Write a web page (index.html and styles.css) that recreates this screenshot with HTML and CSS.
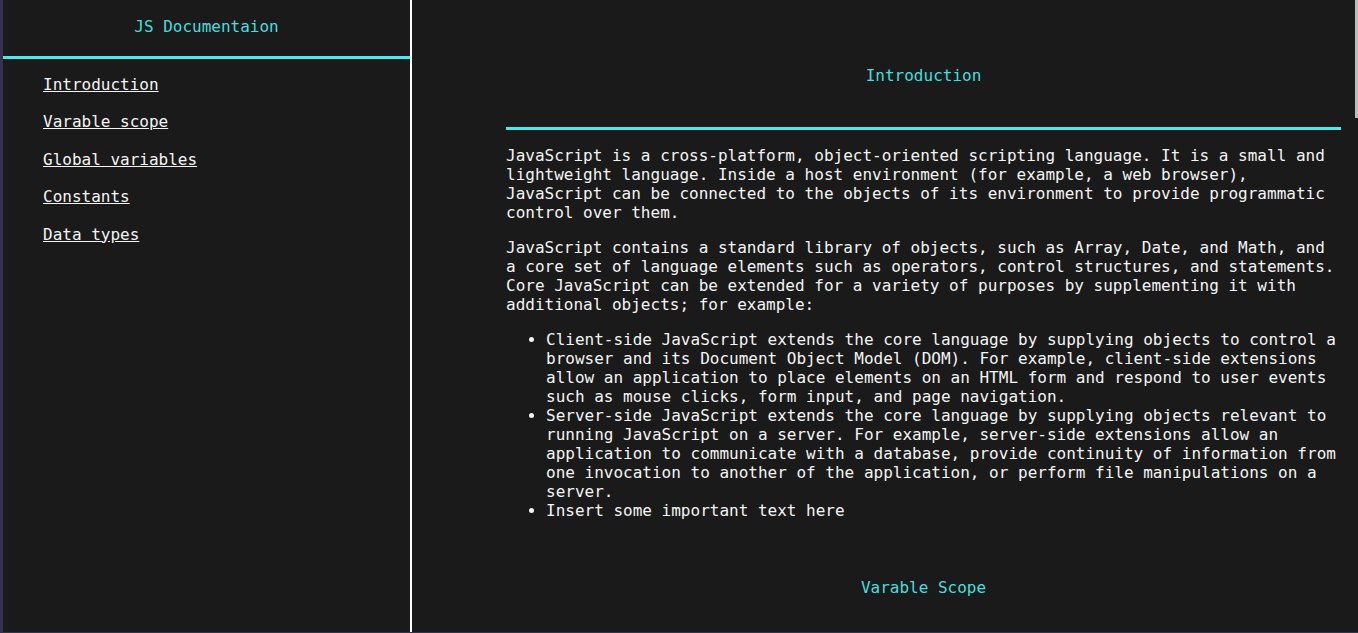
FILE: index.html
```html
<!DOCTYPE html>
<html lang="en">
<head>
<meta charset="utf-8">
<title>JS Documentation</title>
<link rel="stylesheet" href="styles.css">
</head>
<body>
<div class="page">
  <nav class="navbar" id="navbar">
    <header class="nav-header">JS Documentaion</header>
    <ul class="nav-list">
      <li><a class="nav-link" href="#Introduction">Introduction</a></li>
      <li><a class="nav-link" href="#Varable_scope">Varable scope</a></li>
      <li><a class="nav-link" href="#Global_variables">Global variables</a></li>
      <li><a class="nav-link" href="#Constants">Constants</a></li>
      <li><a class="nav-link" href="#Data_types">Data types</a></li>
    </ul>
  </nav>
  <main class="main-doc" id="main-doc">
    <section class="main-section" id="Introduction">
      <header class="section-header">Introduction</header>
      <p>JavaScript is a cross-platform, object-oriented scripting language. It is a small and lightweight language. Inside a host environment (for example, a web browser), JavaScript can be connected to the objects of its environment to provide programmatic control over them.</p>
      <p>JavaScript contains a standard library of objects, such as Array, Date, and Math, and a core set of language elements such as operators, control structures, and statements. Core JavaScript can be extended for a variety of purposes by supplementing it with additional objects; for example:</p>
      <ul>
        <li>Client-side JavaScript extends the core language by supplying objects to control a browser and its Document Object Model (DOM). For example, client-side extensions allow an application to place elements on an HTML form and respond to user events such as mouse clicks, form input, and page navigation.</li>
        <li>Server-side JavaScript extends the core language by supplying objects relevant to running JavaScript on a server. For example, server-side extensions allow an application to communicate with a database, provide continuity of information from one invocation to another of the application, or perform file manipulations on a server.</li>
        <li>Insert some important text here</li>
      </ul>
    </section>
    <section class="main-section" id="Varable_scope">
      <header class="section-header">Varable Scope</header>
      <p>When you declare a variable outside of any function, it is called a global variable, because it is available to any other code in the current document. When you declare a variable within a function, it is called a local variable, because it is available only within that function.</p>
      <p>JavaScript before ECMAScript 2015 does not have block statement scope; rather, a variable declared within a block is local to the function (or global scope) that the block resides within.</p>
    </section>
    <section class="main-section" id="Global_variables">
      <header class="section-header">Global Variables</header>
      <p>Global variables are in fact properties of the global object. In web pages the global object is window, so you can set and access global variables using the window.variable syntax.</p>
    </section>
    <section class="main-section" id="Constants">
      <header class="section-header">Constants</header>
      <p>You can create a read-only, named constant with the const keyword. A constant cannot change value through assignment or be re-declared while the script is running.</p>
    </section>
    <section class="main-section" id="Data_types">
      <header class="section-header">Data Types</header>
      <p>The latest ECMAScript standard defines seven data types: Boolean, null, undefined, Number, String, Symbol and Object.</p>
    </section>
  </main>
  <div class="scroll-thumb" aria-hidden="true"></div>
</div>
</body>
</html>
```

FILE: styles.css
```css
html, body {
  margin: 0;
  padding: 0;
  height: 100%;
  background: #35334b;
  overflow: hidden;
}

.page {
  position: relative;
  display: flex;
  height: calc(100vh - 1px);
  margin-left: 3px;
  background: #1a1a1a;
  color: #f4f4f4;
  font-family: "DejaVu Sans Mono", monospace;
  font-size: 16px;
  line-height: 19px;
}

.navbar {
  flex: 0 0 407px;
  border-right: 2px solid #ffffff;
}

.nav-header {
  padding: 17px 0 20px;
  text-align: center;
  color: #45dede;
  border-bottom: 3px solid #4deaea;
}

.nav-list {
  list-style: none;
  margin: 0;
  padding: 6.25px 0 0 40px;
}

.nav-list li {
  padding: 9.25px 0;
}

.nav-link {
  color: #f4f4f4;
  text-decoration: underline;
}

.main-doc {
  flex: 1;
  overflow: hidden;
  padding: 24px 17px 0 94px;
}

.scroll-thumb {
  position: absolute;
  top: 0;
  right: 0;
  width: 3px;
  height: 118px;
  background: #bdbdbd;
}

.section-header {
  padding: 42px 0;
  text-align: center;
  color: #45dede;
  border-bottom: 3px solid #4deaea;
}

.main-section p {
  margin: 16px 0;
}

.main-section ul {
  margin: 16px 0;
  padding-left: 40px;
}
```
